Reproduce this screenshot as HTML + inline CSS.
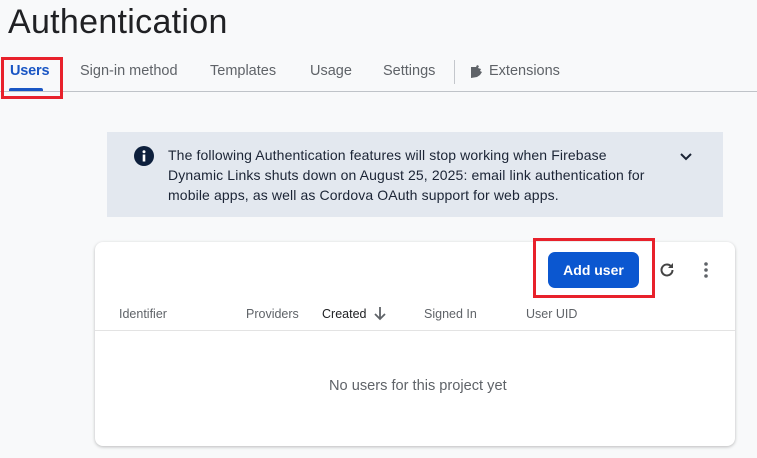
<!DOCTYPE html>
<html><head><meta charset="utf-8"><style>
*{margin:0;padding:0;box-sizing:border-box}
body{width:757px;height:458px;overflow:hidden;background:#f8f9fa;font-family:"Liberation Sans",sans-serif;position:relative;color:#202124}
.abs{position:absolute;white-space:nowrap}
h1{position:absolute;left:8px;top:3px;font-size:34px;font-weight:400;color:#202124;letter-spacing:0.3px}
.tab{position:absolute;top:63px;font-size:14.5px;color:#5f6368;letter-spacing:0px}
.th{position:absolute;top:307px;font-size:12.5px;color:#5f6368}
</style></head><body>
<h1>Authentication</h1>
<div class="tab" style="left:10px;color:#1a56c4;font-weight:bold;letter-spacing:-0.2px">Users</div>
<div class="abs" style="left:9px;top:88px;width:34px;height:3px;background:#1a56c4;border-radius:2px 2px 0 0"></div>
<div class="tab" style="left:80px">Sign-in method</div>
<div class="tab" style="left:210px">Templates</div>
<div class="tab" style="left:310px">Usage</div>
<div class="tab" style="left:383px">Settings</div>
<div class="abs" style="left:454px;top:60px;width:1px;height:24px;background:#c4c7cc"></div>
<svg class="abs" style="left:469px;top:64px" width="15" height="15" viewBox="0 0 15 15"><path d="M2 3h5l1-2 2 1-1 2 3 1-1 2 2 1-2 3-3 2-6 1z" fill="#5f6368"/></svg>
<div class="tab" style="left:489px">Extensions</div>
<div class="abs" style="left:0;top:91px;width:757px;height:1px;background:#bfc3c8"></div>
<div class="abs" style="left:1px;top:57px;width:62px;height:42px;border:3px solid #e8212b"></div>

<div class="abs" style="left:107px;top:132px;width:616px;height:85px;background:#e3e8ef"></div>
<svg class="abs" style="left:134px;top:146px" width="20" height="20" viewBox="0 0 20 20"><circle cx="10" cy="10" r="10" fill="#0d1f3c"/><rect x="8.7" y="8.5" width="2.6" height="7" fill="#fff"/><circle cx="10" cy="5.8" r="1.5" fill="#fff"/></svg>
<div class="abs" style="left:168px;top:145px;font-size:14px;line-height:20px;color:#1b2435;letter-spacing:0.12px">The following Authentication features will stop working when Firebase<br>Dynamic Links shuts down on August 25, 2025: email link authentication for<br>mobile apps, as well as Cordova OAuth support for web apps.</div>
<svg class="abs" style="left:679px;top:152px" width="14" height="10" viewBox="0 0 14 10"><path d="M2 2l5 5 5-5" stroke="#1b2435" stroke-width="2" fill="none"/></svg>

<div class="abs" style="left:95px;top:242px;width:640px;height:204px;background:#fff;border-radius:8px;box-shadow:0 1px 3px rgba(0,0,0,.25)"></div>
<div class="abs" style="left:548px;top:252px;width:91px;height:36px;background:#0b57d0;border-radius:7px;color:#fff;font-weight:bold;font-size:14px;text-align:center;line-height:36px">Add user</div>
<div class="abs" style="left:533px;top:238px;width:122px;height:60px;border:3px solid #e8212b"></div>
<svg class="abs" style="left:657px;top:260px" width="20" height="20" viewBox="0 0 20 20"><path d="M15.5 10a5.5 5.5 0 1 1-1.8-4.1" stroke="#444" stroke-width="2" fill="none"/><path d="M16 3v5h-5z" fill="#444"/></svg>
<svg class="abs" style="left:702px;top:261px" width="8" height="18" viewBox="0 0 8 18"><circle cx="4" cy="3" r="1.8" fill="#5f6368"/><circle cx="4" cy="9" r="1.8" fill="#5f6368"/><circle cx="4" cy="15" r="1.8" fill="#5f6368"/></svg>
<div class="th" style="left:119px">Identifier</div>
<div class="th" style="left:246px">Providers</div>
<div class="th" style="left:322px;color:#202124">Created</div>
<svg class="abs" style="left:373px;top:306px" width="14" height="15" viewBox="0 0 14 15"><path d="M7 1v12M2 8l5 5 5-5" stroke="#5f6368" stroke-width="1.8" fill="none"/></svg>
<div class="th" style="left:424px">Signed In</div>
<div class="th" style="left:526px">User UID</div>
<div class="abs" style="left:95px;top:330px;width:640px;height:1px;background:#e3e3e3"></div>
<div class="abs" style="left:329px;top:378px;font-size:14.6px;color:#5f6368">No users for this project yet</div>
</body></html>
